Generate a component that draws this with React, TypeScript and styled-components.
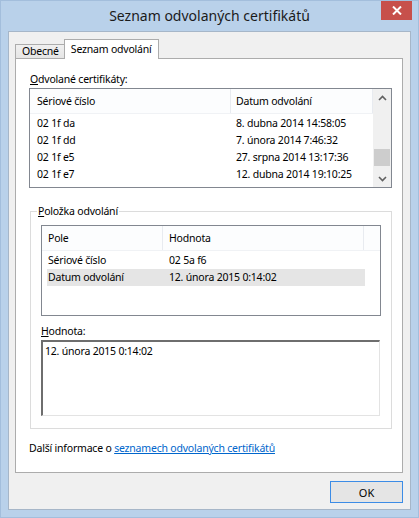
import React from "react";
import styled, {createGlobalStyle} from "styled-components";

const GlobalStyle = createGlobalStyle`
    html, body {
        margin: 0;
        padding: 0;
        background: #b9d1ea;
    }
    body {
        font-family: "Noto Sans", "DejaVu Sans", sans-serif;
        font-size: 10.5px;
        letter-spacing: -0.2px;
        color: #000;
    }
`;

interface CertRow {
    serial: string;
    date: string;
}

const REVOKED: CertRow[] = [
    {serial: "02 1f da", date: "8. dubna 2014 14:58:05"},
    {serial: "02 1f dd", date: "7. února 2014 7:46:32"},
    {serial: "02 1f e5", date: "27. srpna 2014 13:17:36"},
    {serial: "02 1f e7", date: "12. dubna 2014 19:10:25"},
    {serial: "02 1f ea", date: "3. května 2014 9:12:44"},
];

const ENTRY = [
    {field: "Sériové číslo", value: "02 5a f6"},
    {field: "Datum odvolání", value: "12. února 2015 0:14:02", selected: true},
];

const Chevron = ({dir}: {dir: "up" | "down"}) => (
    <svg width="9" height="6" viewBox="0 0 9 6">
        <polyline
            points={dir === "up" ? "1,5 4.5,1.5 8,5" : "1,1 4.5,4.5 8,1"}
            fill="none"
            stroke="#606060"
            strokeWidth="1.6"
        />
    </svg>
);

export default function App() {
    return (
        <>
            <GlobalStyle />
            <Window>
                <TitleBar>
                    <span />
                    <Title>Seznam odvolaných certifikátů</Title>
                    <CloseButton>
                        <svg width="10" height="9" viewBox="0 0 10 9">
                            <path d="M1 0.5 L9 8.5 M9 0.5 L1 8.5" stroke="#fff" strokeWidth="2" />
                        </svg>
                    </CloseButton>
                </TitleBar>
                <Client>
                    <TabStrip>
                        <Tab>Obecné</Tab>
                        <Tab $active>Seznam odvolání</Tab>
                    </TabStrip>
                    <TabPanel>
                        <FieldLabel>
                            <u>O</u>dvolané certifikáty:
                        </FieldLabel>
                        <CertList>
                            <ListBody>
                                <HeaderRow $cols="201px 1fr">
                                    <HeaderCell $pad={7}>Sériové číslo</HeaderCell>
                                    <HeaderCell $pad={5}>Datum odvolání</HeaderCell>
                                </HeaderRow>
                                {REVOKED.map(r => (
                                    <DataRow key={r.serial} $cols="201px 1fr">
                                        <Cell $pad={7}>{r.serial}</Cell>
                                        <Cell $pad={5}>{r.date}</Cell>
                                    </DataRow>
                                ))}
                            </ListBody>
                            <ScrollBar>
                                <ScrollArrow>
                                    <Chevron dir="up" />
                                </ScrollArrow>
                                <ScrollTrack>
                                    <Thumb />
                                </ScrollTrack>
                                <ScrollArrow>
                                    <Chevron dir="down" />
                                </ScrollArrow>
                            </ScrollBar>
                        </CertList>

                        <GroupBox>
                            <Legend>
                                <u>P</u>oložka odvolání
                            </Legend>
                            <EntryList>
                                <HeaderRow $cols="121px 201px 1fr">
                                    <HeaderCell $pad={6}>Pole</HeaderCell>
                                    <HeaderCell $pad={6}>Hodnota</HeaderCell>
                                    <span />
                                </HeaderRow>
                                {ENTRY.map(e => (
                                    <EntryRow key={e.field} $selected={e.selected}>
                                        <Cell $pad={1}>{e.field}</Cell>
                                        <Cell $pad={6}>{e.value}</Cell>
                                    </EntryRow>
                                ))}
                            </EntryList>
                            <FieldLabel $indent={0} $top={8}>
                                <u>H</u>odnota:
                            </FieldLabel>
                            <ValueBox>12. února 2015 0:14:02</ValueBox>
                        </GroupBox>

                        <InfoLine>
                            Další informace o <InfoLink href="#">seznamech odvolaných certifikátů</InfoLink>
                        </InfoLine>
                    </TabPanel>
                    <ButtonRow>
                        <OkButton>OK</OkButton>
                    </ButtonRow>
                </Client>
            </Window>
        </>
    );
}

// ---------------------------------------------------------------------------
// Styles
// ---------------------------------------------------------------------------

const Window = styled.div`
    width: 419px;
    height: 518px;
    box-sizing: border-box;
    border: 1px solid #a3bedc;
    background: #b9d1ea;
    display: flex;
    flex-direction: column;
`;

const TitleBar = styled.div`
    height: 30px;
    display: grid;
    grid-template-columns: 1fr auto 1fr;
    align-items: start;
`;

const Title = styled.span`
    font-size: 14px;
    letter-spacing: 0;
    line-height: 30px;
    color: #1b1b1b;
    white-space: nowrap;
`;

const CloseButton = styled.div`
    justify-self: end;
    margin-right: 6px;
    width: 31px;
    height: 19px;
    background: #c7504b;
    display: flex;
    align-items: center;
    justify-content: center;
`;

const Client = styled.div`
    flex: 1;
    margin: 0 7px 7px 7px;
    border: 1px solid #a6b6c8;
    background: #f0f0f0;
    display: flex;
    flex-direction: column;
`;

const TabStrip = styled.div`
    display: flex;
    align-items: flex-end;
    padding: 7px 0 0 6px;
    height: 19px;
`;

const Tab = styled.div<{$active?: boolean}>`
    box-sizing: border-box;
    height: ${p => (p.$active ? "20px" : "15px")};
    padding: ${p => (p.$active ? "0 6px 0 6px" : "0 5px 0 6px")};
    margin-bottom: -1px;
    margin-left: ${p => (p.$active ? "-1px" : "0")};
    border: 1px solid #acacac;
    border-bottom: ${p => (p.$active ? "none" : "1px solid #acacac")};
    background: ${p => (p.$active ? "#fff" : "linear-gradient(#f0f0f0, #e5e5e5)")};
    position: relative;
    z-index: ${p => (p.$active ? 1 : 0)};
    display: flex;
    align-items: center;
    line-height: 13px;
    white-space: nowrap;
`;

const TabPanel = styled.div`
    margin: 0 7px 0 6px;
    height: 415px;
    box-sizing: border-box;
    border: 1px solid #acacac;
    background: #fff;
    display: flex;
    flex-direction: column;
    padding: 13px 10px 0 13px;
`;

const FieldLabel = styled.div<{$indent?: number; $top?: number}>`
    line-height: 15px;
    padding-left: ${p => p.$indent ?? 1}px;
    margin-top: ${p => p.$top ?? 0}px;
    margin-bottom: 1px;
`;

const CertList = styled.div`
    height: 100px;
    box-sizing: border-box;
    border: 1px solid #828790;
    display: grid;
    grid-template-columns: 1fr 18px;
    overflow: hidden;
`;

const ListBody = styled.div`
    overflow: hidden;
`;

const HeaderRow = styled.div<{$cols: string}>`
    display: grid;
    grid-template-columns: ${p => p.$cols};
    height: 24px;
    border-bottom: 1px solid #f0f2f5;
    background: #fcfdfe;
    margin-bottom: 1px;
`;

const HeaderCell = styled.div<{$pad: number}>`
    padding-left: ${p => p.$pad}px;
    line-height: 24px;
    border-right: 1px solid #e8ebf0;
    white-space: nowrap;
`;

const DataRow = styled.div<{$cols: string}>`
    display: grid;
    grid-template-columns: ${p => p.$cols};
    height: 17px;
    line-height: 17px;
`;

const Cell = styled.div<{$pad: number}>`
    padding-left: ${p => p.$pad}px;
    white-space: nowrap;
    overflow: hidden;
`;

const ScrollBar = styled.div`
    background: #f0f0f0;
    display: flex;
    flex-direction: column;
`;

const ScrollArrow = styled.div`
    height: 17px;
    display: flex;
    align-items: center;
    justify-content: center;
`;

const ScrollTrack = styled.div`
    flex: 1;
    display: flex;
    flex-direction: column;
    justify-content: flex-end;
    padding-bottom: 4px;
`;

const Thumb = styled.div`
    height: 17px;
    margin: 0 1px;
    background: #cdcdcd;
`;

const GroupBox = styled.fieldset`
    margin: 16px 0 0 1px;
    width: 362px;
    box-sizing: border-box;
    border: 1px solid #dcdcdc;
    padding: 0 10px 12px 10px;
    display: flex;
    flex-direction: column;
`;

const Legend = styled.legend`
    padding: 0 1px;
    margin-left: -4px;
    line-height: 15px;
`;

const EntryList = styled.div`
    margin-top: 6px;
    height: 91px;
    box-sizing: border-box;
    border: 1px solid #828790;
    overflow: hidden;
`;

const EntryRow = styled.div<{$selected?: boolean}>`
    display: grid;
    grid-template-columns: 116px 1fr;
    height: 17px;
    line-height: 17px;
    margin: 0 15px 0 5px;
    background: ${p => (p.$selected ? "#e5e5e5" : "transparent")};
`;

const ValueBox = styled.div`
    height: 76px;
    width: 339px;
    box-sizing: border-box;
    border-top: 2px solid #6e6e6e;
    border-left: 2px solid #6e6e6e;
    border-right: 1px solid #e3e3e3;
    border-bottom: 1px solid #e3e3e3;
    padding: 2px 2px;
    line-height: 15px;
`;

const InfoLine = styled.div`
    margin-top: 12px;
    line-height: 15px;
    white-space: nowrap;
`;

const InfoLink = styled.a`
    color: #0066cc;
    text-decoration: underline;
`;

const ButtonRow = styled.div`
    display: flex;
    justify-content: flex-end;
    padding: 8px 7px 0 0;
`;

const OkButton = styled.button`
    width: 73px;
    height: 22px;
    box-sizing: border-box;
    border: 1px solid #3c8ce6;
    background: #e5e5e5;
    font-family: "Noto Sans", "DejaVu Sans", sans-serif;
    font-size: 11px;
    color: #000;
    padding: 0;
`;
